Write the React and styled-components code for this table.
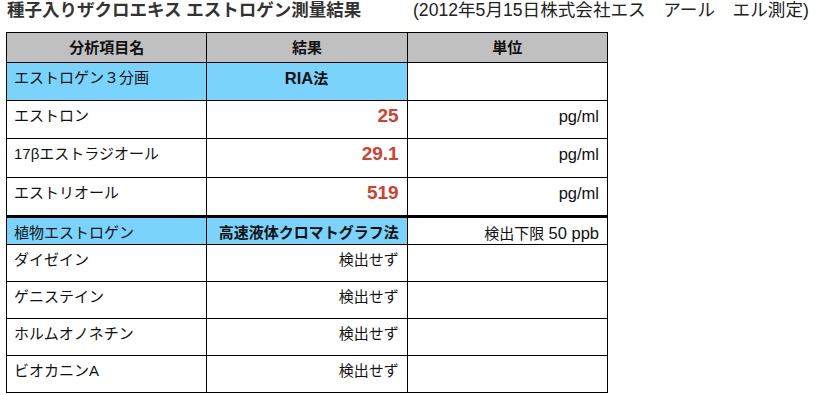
import React from "react";
import styled, { createGlobalStyle } from "styled-components";

const Global = createGlobalStyle`
  html, body { margin: 0; padding: 0; background: #fff; }
  body { font-family: "Liberation Sans", "Noto Sans CJK JP", sans-serif; color: #111; }
`;

const Page = styled.div`
  padding: 0 0 0 6px;
`;

const TitleBar = styled.div`
  display: flex;
  align-items: baseline;
  height: 32px;
  padding-left: 1px;
`;

const Title = styled.h1`
  margin: 0;
  font-size: 17.5px;
  font-weight: bold;
  color: #333;
  line-height: 20px;
  width: 406px;
`;

const Note = styled.span`
  font-size: 17.6px;
  color: #222;
  line-height: 20px;
`;

const Table = styled.table`
  border-collapse: collapse;
  table-layout: fixed;
  width: 602px;
  font-size: 15px;
`;

const Row = styled.tr`
  height: ${(p) => p.$h}px;
  background: #fff;
`;

const Cell = styled.td`
  border: 1px solid #000;
  padding: 5px 8px 0 7px;
  vertical-align: top;
  text-align: ${(p) => p.$align || "left"};
  font-weight: ${(p) => (p.$bold ? "bold" : "normal")};
  background: ${(p) => (p.$blue ? "#79d3fa" : "#fff")};
  line-height: 20px;
  color: #111;
  ${(p) => p.$thick && "border-top: 3px solid #000;"}
`;

const Value = styled.span`
  color: #d3402d;
  font-weight: bold;
  font-size: 19px;
`;

const Latin = styled.span`
  font-size: 16.5px;
`;

const HeadCell = styled.th`
  border: 1px solid #000;
  font-weight: bold;
  font-size: 15px;
  text-align: center;
  line-height: 20px;
  color: #111;
  background: #c0c0c0;
  padding: 0;
`;

const rows1 = [
  ["エストロン", "25", "pg/ml"],
  ["17βエストラジオール", "29.1", "pg/ml"],
  ["エストリオール", "519", "pg/ml"],
];

const rows2 = ["ダイゼイン", "ゲニステイン", "ホルムオノネチン", "ビオカニンA"];

export default function App() {
  return (
    <Page>
      <Global />
      <TitleBar>
        <Title>種子入りザクロエキス エストロゲン測量結果</Title>
        <Note>(2012年5月15日株式会社エス　アール　エル測定)</Note>
      </TitleBar>
      <Table>
        <thead>
          <Row $h={30}>
            <HeadCell>分析項目名</HeadCell>
            <HeadCell>結果</HeadCell>
            <HeadCell>単位</HeadCell>
          </Row>
        </thead>
        <tbody>
          <Row $h={38}>
            <Cell $blue>エストロゲン３分画</Cell>
            <Cell $blue $align="center" $bold><Latin>RIA</Latin>法</Cell>
            <Cell />
          </Row>
          {rows1.map(([n, v, u], i) => (
            <Row key={n} $h={i === 0 ? 38 : 39}>
              <Cell>{n}</Cell>
              <Cell $align="right"><Value>{v}</Value></Cell>
              <Cell $align="right"><Latin>{u}</Latin></Cell>
            </Row>
          ))}
          <Row $h={28}>
            <Cell $thick $blue>植物エストロゲン</Cell>
            <Cell $thick $blue $align="right" $bold>高速液体クロマトグラフ法</Cell>
            <Cell $thick $align="right">検出下限 <Latin>50 ppb</Latin></Cell>
          </Row>
          {rows2.map((n) => (
            <Row key={n} $h={37}>
              <Cell>{n}</Cell>
              <Cell $align="right">検出せず</Cell>
              <Cell />
            </Row>
          ))}
        </tbody>
      </Table>
    </Page>
  );
}
